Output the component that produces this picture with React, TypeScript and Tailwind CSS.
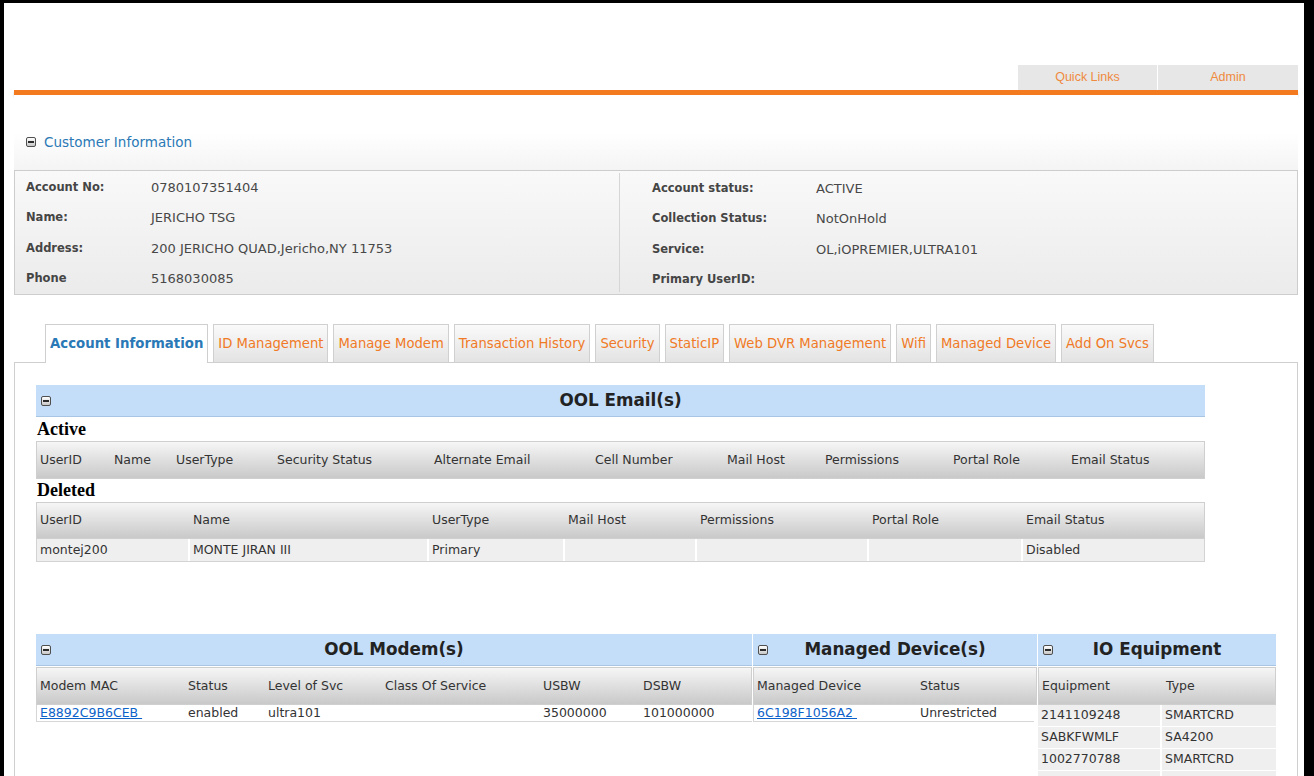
import React from 'react';

// account summary shown in the customer box
const leftInfo = [
  { label: 'Account No:', value: '0780107351404' },
  { label: 'Name:', value: 'JERICHO TSG' },
  { label: 'Address:', value: '200 JERICHO QUAD,Jericho,NY 11753' },
  { label: 'Phone', value: '5168030085' },
];

const rightInfo = [
  { label: 'Account status:', value: 'ACTIVE' },
  { label: 'Collection Status:', value: 'NotOnHold' },
  { label: 'Service:', value: 'OL,iOPREMIER,ULTRA101' },
  { label: 'Primary UserID:', value: '' },
];

const tabs = [
  'Account Information',
  'ID Management',
  'Manage Modem',
  'Transaction History',
  'Security',
  'StaticIP',
  'Web DVR Management',
  'Wifi',
  'Managed Device',
  'Add On Svcs',
];

type Col = { title: string; w: number };

const activeCols: Col[] = [
  { title: 'UserID', w: 74 },
  { title: 'Name', w: 62 },
  { title: 'UserType', w: 101 },
  { title: 'Security Status', w: 157 },
  { title: 'Alternate Email', w: 161 },
  { title: 'Cell Number', w: 132 },
  { title: 'Mail Host', w: 98 },
  { title: 'Permissions', w: 128 },
  { title: 'Portal Role', w: 118 },
  { title: 'Email Status', w: 136 },
];

const deletedCols: Col[] = [
  { title: 'UserID', w: 153 },
  { title: 'Name', w: 239 },
  { title: 'UserType', w: 136 },
  { title: 'Mail Host', w: 132 },
  { title: 'Permissions', w: 172 },
  { title: 'Portal Role', w: 154 },
  { title: 'Email Status', w: 181 },
];

const deletedRows = [['montej200', 'MONTE JIRAN III', 'Primary', '', '', '', 'Disabled']];

const modemCols: Col[] = [
  { title: 'Modem MAC', w: 148 },
  { title: 'Status', w: 80 },
  { title: 'Level of Svc', w: 117 },
  { title: 'Class Of Service', w: 158 },
  { title: 'USBW', w: 100 },
  { title: 'DSBW', w: 111 },
];

const deviceCols: Col[] = [
  { title: 'Managed Device', w: 163 },
  { title: 'Status', w: 119 },
];

const equipCols: Col[] = [
  { title: 'Equipment', w: 124 },
  { title: 'Type', w: 114 },
];

const equipment = [
  ['2141109248', 'SMARTCRD'],
  ['SABKFWMLF', 'SA4200'],
  ['1002770788', 'SMARTCRD'],
  ['', ''],
];

function CollapseIcon() {
  return (
    <span className="inline-flex h-[10px] w-[10px] shrink-0 items-center justify-center rounded-[2px] border border-[#4f4f4f] bg-gradient-to-b from-white to-[#c8c8c8]">
      <span className="h-[2px] w-[6px] bg-[#2b2b2b]" />
    </span>
  );
}

function SectionBar({ title }: { title: string }) {
  return (
    <div className="flex h-[32px] items-center border-b border-[#a9c5e4] bg-[#c4ddf9]">
      <span className="ml-[5px] mr-[3px] flex">
        <CollapseIcon />
      </span>
      <div className="flex-1 pr-[18px] text-center text-[16.8px] font-bold text-[#222]">{title}</div>
    </div>
  );
}

function HeadRow({ cols, h = 'h-[38px]' }: { cols: Col[]; h?: string }) {
  return (
    <div className={`flex ${h} items-center border border-[#cfcfcf] bg-gradient-to-b from-[#f6f6f6] to-[#c9c9c9]`}>
      {cols.map((c) => (
        <div key={c.title} style={{ width: c.w }} className="shrink-0 pl-[3px] text-[12.5px] text-[#333]">
          {c.title}
        </div>
      ))}
    </div>
  );
}

export default function App() {
  return (
    <div className="min-h-[776px] bg-black pl-[4px] pr-[10px] pt-[3px] font-['DejaVu_Sans',Verdana,sans-serif]">
      <div className="min-h-[773px] bg-white pl-[10px] pr-[6px]">
        {/* top links */}
        <div className="flex h-[87px] items-end justify-end gap-[1px] font-['Liberation_Sans',Arial,sans-serif] text-[12.5px] text-[#ef8a3e]">
          <div className="flex h-[25px] w-[139px] items-center justify-center bg-[#e7e7e7]">Quick Links</div>
          <div className="flex h-[25px] w-[140px] items-center justify-center bg-[#e7e7e7]">Admin</div>
        </div>
        <div className="h-[5px] bg-[#f47a20] shadow-[0_2px_2px_rgba(0,0,0,0.22)]" />

        {/* customer information */}
        <div className="h-[75px] bg-gradient-to-b from-white via-white to-[#f4f4f4] pt-[40px]">
          <div className="flex h-[14px] items-center gap-[8px] pl-[12px]">
            <CollapseIcon />
            <span className="text-[13.5px] leading-[14px] text-[#2a79b6]">Customer Information</span>
          </div>
        </div>
        <div className="flex h-[125px] border border-[#cdcdcd] bg-gradient-to-b from-[#f9f9f9] to-[#ebebeb] py-[1px]">
          <div className="w-[604px] pl-[11px]">
            {leftInfo.map((r) => (
              <div key={r.label} className="flex h-[30.5px] items-center">
                <span className="w-[125px] text-[11.5px] font-bold text-[#454545]">{r.label}</span>
                <span className="text-[13px] text-[#484848]">{r.value}</span>
              </div>
            ))}
          </div>
          <div className="my-[1px] border-l border-[#d6d6d6] pl-[32px]">
            {rightInfo.map((r) => (
              <div key={r.label} className="flex h-[30.5px] items-center">
                <span className="w-[164px] text-[11.5px] font-bold text-[#454545]">{r.label}</span>
                <span className="text-[13px] text-[#484848]">{r.value}</span>
              </div>
            ))}
          </div>
        </div>

        {/* tabs */}
        <div className="mt-[29px] flex items-start gap-[5px] pl-[31px]">
          {tabs.map((t, i) =>
            i === 0 ? (
              <div
                key={t}
                className="relative z-10 -mb-px flex h-[39px] items-center border border-b-0 border-[#cfcfcf] bg-white px-[4px] pb-[1px] text-[13.3px] font-bold text-[#2a79b6]"
              >
                {t}
              </div>
            ) : (
              <div
                key={t}
                className="flex h-[38px] items-center border border-b-0 border-[#d0d0d0] bg-gradient-to-b from-[#fafafa] to-[#e3e3e3] px-[4px] text-[13.2px] text-[#f07a26]"
              >
                {t}
              </div>
            )
          )}
        </div>

        {/* tab body */}
        <div className="min-h-[420px] border border-b-0 border-[#cfcfcf] px-[21px] pt-[22px]">
          <div className="w-[1169px]">
            <SectionBar title="OOL Email(s)" />
            <div className="flex h-[24px] items-center pl-[1px] font-['Liberation_Serif','Times_New_Roman',serif] text-[18px] font-bold text-black">
              Active
            </div>
            <HeadRow cols={activeCols} />
            <div className="flex h-[23px] items-center pl-[1px] font-['Liberation_Serif','Times_New_Roman',serif] text-[18px] font-bold text-black">
              Deleted
            </div>
            <HeadRow cols={deletedCols} h="h-[37px]" />
            {deletedRows.map((row, ri) => (
              <div key={ri} className="flex h-[23px] border border-t-0 border-[#d3d3d3] bg-[#efefef]">
                {row.map((v, i) => (
                  <div
                    key={i}
                    style={{ width: deletedCols[i].w }}
                    className="flex shrink-0 items-center border-r-2 border-white pl-[3px] text-[12.5px] text-[#333] last:border-r-0"
                  >
                    {v}
                  </div>
                ))}
              </div>
            ))}
          </div>

          {/* modem / device / equipment panels */}
          <div className="mt-[72px] flex items-start gap-[1px]">
            <div className="w-[716px]">
              <SectionBar title="OOL Modem(s)" />
              <div className="mt-[1px]">
                <HeadRow cols={modemCols} />
              </div>
              <div className="flex h-[17px] items-center border-b border-l border-[#d6d6d6] text-[12.5px] text-[#333]">
                <div style={{ width: modemCols[0].w }} className="shrink-0 pl-[3px]">
                  <a href="#" className="text-[#0d62c9] underline">
                    {'E8892C9B6CEB\u00a0'}
                  </a>
                </div>
                <div style={{ width: modemCols[1].w }} className="shrink-0 pl-[3px]">enabled</div>
                <div style={{ width: modemCols[2].w }} className="shrink-0 pl-[3px]">ultra101</div>
                <div style={{ width: modemCols[3].w }} className="shrink-0 pl-[3px]" />
                <div style={{ width: modemCols[4].w }} className="shrink-0 pl-[3px]">35000000</div>
                <div style={{ width: modemCols[5].w }} className="shrink-0 pl-[3px]">101000000</div>
              </div>
            </div>

            <div className="w-[284px]">
              <SectionBar title="Managed Device(s)" />
              <div className="mt-[1px]">
                <HeadRow cols={deviceCols} />
              </div>
              <div className="mr-[3px] flex h-[17px] items-center border-b border-l border-[#d6d6d6] text-[12.5px] text-[#333]">
                <div style={{ width: deviceCols[0].w }} className="shrink-0 pl-[3px]">
                  <a href="#" className="text-[#0d62c9] underline">
                    {'6C198F1056A2\u00a0'}
                  </a>
                </div>
                <div className="pl-[3px]">Unrestricted</div>
              </div>
            </div>

            <div className="w-[238px]">
              <SectionBar title="IO Equipment" />
              <div className="mt-[1px]">
                <HeadRow cols={equipCols} />
              </div>
              {equipment.map((row, ri) => (
                <div key={ri} className="flex h-[22px] border-b border-white bg-[#efefef] text-[12.5px] text-[#333]">
                  {row.map((v, i) => (
                    <div
                      key={i}
                      style={{ width: equipCols[i].w }}
                      className="flex shrink-0 items-center border-r-2 border-white pl-[3px] last:border-r-0"
                    >
                      {v}
                    </div>
                  ))}
                </div>
              ))}
            </div>
          </div>
        </div>
      </div>
    </div>
  );
}
